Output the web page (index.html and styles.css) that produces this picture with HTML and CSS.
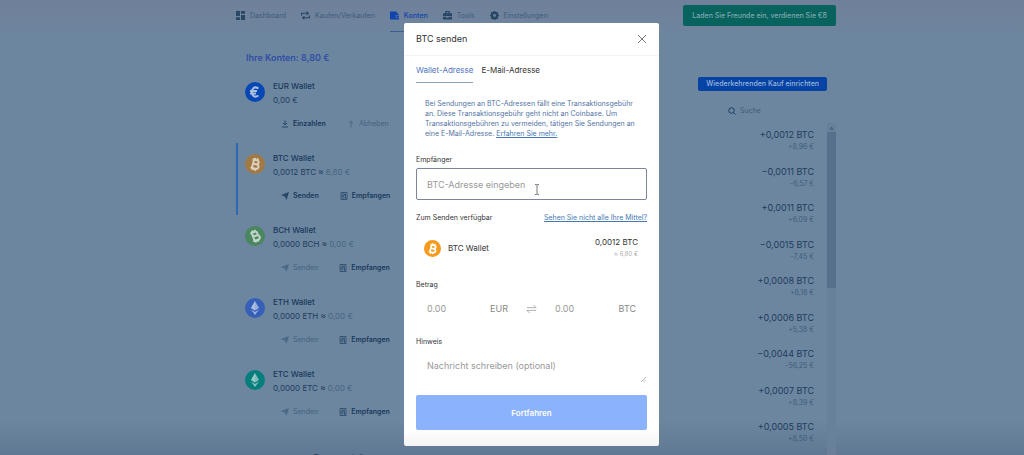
FILE: index.html
```
<!DOCTYPE html>
<html lang="de">
<head>
    <meta charset="UTF-8">
    <meta name="viewport" content="width=device-width, initial-scale=1.0">
    <title>BTC senden</title>
    <link rel="stylesheet" href="styles.css">
</head>
<body>
    <!-- Shared icons -->
    <svg class="sprite" aria-hidden="true">
        <symbol id="send" viewBox="0 0 16 16"><path d="M0 6 16 0 11 16 7.5 9z" fill="currentColor"/></symbol>
        <symbol id="qr" viewBox="0 0 16 16"><path d="M2 1h12v14H2zM6 1v14M9 4h2v3H9zM9 11h3M11 8v6M2 8h6" fill="none" stroke="currentColor" stroke-width="1.500"/></symbol>
        <symbol id="bitcoin" viewBox="0 0 40 40"><g transform="rotate(14 20 20)" fill="none" stroke="#fff" stroke-width="4"><path d="M13 12h9c6 0 6 8 0 8h-6 7c7 0 7 9 0 9H13M16 12v17M18 8v4M23 8v4M18 29v4M23 29v4"/></g></symbol>
        <symbol id="ether" viewBox="0 0 40 40"><path d="M20 6 28 20 20 25 12 20z" fill="#fff" opacity=".75"/><path d="M20 6v19l-8-5z" fill="#fff" opacity=".6"/><path d="M12 23l8 5 8-5-8 11z" fill="#fff" opacity=".8"/></symbol>
    </svg>

    <div class="page">
        <header class="topbar">
            <nav class="nav">
                <a href="#"><svg viewBox="0 0 16 16"><path d="M0 0h7v9H0zM9 0h7v5H9zM0 11h7v5H0zM9 7h7v9H9z" fill="currentColor"/></svg>Dashboard</a>
                <a href="#"><svg viewBox="0 0 16 16"><path d="M1 8V4h12M10 1l3 3-3 3M15 8v4H3M6 9l-3 3 3 3" fill="none" stroke="currentColor" stroke-width="2"/></svg>Kaufen/Verkaufen</a>
                <a href="#" class="active"><svg viewBox="0 0 16 16"><path d="M0 1h12v3h3v3h-5v5h6v3H0zM11 8h5v3h-5z" fill="currentColor"/></svg>Konten</a>
                <a href="#"><svg viewBox="0 0 16 16"><path d="M4 4V0h8v4h4v5H0V4zM6 2v2h4V2zM0 10h6v2h4v-2h6v5H0z" fill="currentColor" fill-rule="evenodd"/></svg>Tools</a>
                <a href="#"><svg viewBox="0 0 16 16"><circle cx="8" cy="8" r="4.5" fill="none" stroke="currentColor" stroke-width="4"/><path d="M8 0v3M8 13v3M0 8h3M13 8h3M2.3 2.3l2 2M11.7 11.7l2 2M13.7 2.3l-2 2M4.3 11.7l-2 2" stroke="currentColor" stroke-width="3"/></svg>Einstellungen</a>
            </nav>
            <button class="invite">Laden Sie Freunde ein, verdienen Sie €8</button>
        </header>

        <main class="content">
            <section class="accounts">
                <h2>Ihre Konten: 8,80 €</h2>
                <article class="account">
                    <svg class="coin eur" viewBox="0 0 40 40"><path d="M27 13c-8-5-13-1-13 7s5 12 13 7M10 18h14M10 23h12" fill="none" stroke="currentColor" stroke-width="4"/></svg>
                    <div class="account-info">
                        <h3>EUR Wallet</h3>
                        <p>0,00 €</p>
                        <div class="actions">
                            <button><svg viewBox="0 0 16 16"><path d="M8 1v9M4 6l4 4 4-4M2 14h12" fill="none" stroke="currentColor" stroke-width="2"/></svg>Einzahlen</button>
                            <button disabled><svg viewBox="0 0 16 16"><path d="M8 15V2M4 6l4-4 4 4" fill="none" stroke="currentColor" stroke-width="2"/></svg>Abheben</button>
                        </div>
                    </div>
                </article>
                <article class="account selected">
                    <svg class="coin btc"><use href="#bitcoin"/></svg>
                    <div class="account-info">
                        <h3>BTC Wallet</h3>
                        <p>0,0012 BTC ≈ <span>6,80 €</span></p>
                        <div class="actions">
                            <button><svg><use href="#send"/></svg>Senden</button>
                            <button><svg><use href="#qr"/></svg>Empfangen</button>
                        </div>
                    </div>
                </article>
                <article class="account">
                    <svg class="coin bch" viewBox="0 0 40 40"><use href="#bitcoin" transform="rotate(-34 20 20)"/></svg>
                    <div class="account-info">
                        <h3>BCH Wallet</h3>
                        <p>0,0000 BCH ≈ <span>0,00 €</span></p>
                        <div class="actions">
                            <button disabled><svg><use href="#send"/></svg>Senden</button>
                            <button><svg><use href="#qr"/></svg>Empfangen</button>
                        </div>
                    </div>
                </article>
                <article class="account">
                    <svg class="coin eth"><use href="#ether"/></svg>
                    <div class="account-info">
                        <h3>ETH Wallet</h3>
                        <p>0,0000 ETH ≈ <span>0,00 €</span></p>
                        <div class="actions">
                            <button disabled><svg><use href="#send"/></svg>Senden</button>
                            <button><svg><use href="#qr"/></svg>Empfangen</button>
                        </div>
                    </div>
                </article>
                <article class="account">
                    <svg class="coin etc"><use href="#ether"/></svg>
                    <div class="account-info">
                        <h3>ETC Wallet</h3>
                        <p>0,0000 ETC ≈ <span>0,00 €</span></p>
                        <div class="actions">
                            <button disabled><svg><use href="#send"/></svg>Senden</button>
                            <button><svg><use href="#qr"/></svg>Empfangen</button>
                        </div>
                    </div>
                </article>
                <button class="create">+ Tresor erstellen</button>
            </section>

            <section class="history">
                <button class="recurring">Wiederkehrenden Kauf einrichten</button>
                <label class="search">
                    <svg viewBox="0 0 16 16"><circle cx="7" cy="7" r="5.5" fill="none" stroke="currentColor" stroke-width="2"/><path d="M11 11l4 4" stroke="currentColor" stroke-width="2"/></svg>
                    <input type="text" placeholder="Suche" aria-label="Suche">
                </label>
                <div class="list">
                    <ul>
                        <li>+0,0012 BTC<small>+8,96 €</small></li>
                        <li>−0,0011 BTC<small>-6,57 €</small></li>
                        <li>+0,0011 BTC<small>+6,09 €</small></li>
                        <li>−0,0015 BTC<small>-7,45 €</small></li>
                        <li>+0,0008 BTC<small>+8,18 €</small></li>
                        <li>+0,0006 BTC<small>+5,38 €</small></li>
                        <li>−0,0044 BTC<small>-56,25 €</small></li>
                        <li>+0,0007 BTC<small>+8,39 €</small></li>
                        <li>+0,0005 BTC<small>+8,50 €</small></li>
                    </ul>
                    <div class="scrollbar">
                        <svg viewBox="0 0 8 8"><path d="M2 6l2-3 2 3z" fill="currentColor"/></svg>
                        <div class="thumb"></div>
                    </div>
                </div>
            </section>
        </main>
    </div>

    <div class="overlay">
        <form class="modal" role="dialog" aria-labelledby="title">
            <div class="modal-header">
                <h1 id="title">BTC senden</h1>
                <button type="button" class="close" aria-label="Schließen"><svg viewBox="0 0 10 10"><path d="M1 1l8 8M9 1L1 9" stroke="currentColor"/></svg></button>
            </div>
            <div class="modal-body">
                <div class="tabs">
                    <button type="button" class="active">Wallet-Adresse</button>
                    <button type="button">E-Mail-Adresse</button>
                </div>
                <p class="notice">Bei Sendungen an BTC-Adressen fällt eine Transaktionsgebühr<br>an. Diese Transaktionsgebühr geht nicht an Coinbase. Um<br>Transaktionsgebühren zu vermeiden, tätigen Sie Sendungen an<br>eine E-Mail-Adresse. <a href="#">Erfahren Sie mehr.</a></p>

                <label class="label" for="recipient">Empfänger</label>
                <div class="recipient">
                    <input id="recipient" type="text" placeholder="BTC-Adresse eingeben">
                    <svg class="caret" viewBox="0 0 6 11"><path d="M1 .5h1.5l.5.5.5-.5H5M3 1v9M1 10.500h1.500l.5-.5.5.5H5" fill="none" stroke="#777"/></svg>
                </div>

                <div class="available">
                    <span class="label">Zum Senden verfügbar</span>
                    <a href="#">Sehen Sie nicht alle Ihre Mittel?</a>
                </div>
                <div class="source">
                    <svg class="coin"><use href="#bitcoin"/></svg>
                    <span>BTC Wallet</span>
                    <div class="balance">0,0012 BTC<small>≈ 6,80 €</small></div>
                </div>

                <label class="label" for="eur">Betrag</label>
                <div class="amount">
                    <div class="field"><input id="eur" type="text" placeholder="0.00"><span>EUR</span></div>
                    <svg viewBox="0 0 12 10"><path d="M1 3.500h10L8 .5M11 6.500H1l3 3" fill="none" stroke="currentColor"/></svg>
                    <div class="field"><input type="text" placeholder="0.00" aria-label="Betrag in BTC"><span>BTC</span></div>
                </div>

                <label class="label" for="note">Hinweis</label>
                <div class="note">
                    <textarea id="note" placeholder="Nachricht schreiben (optional)"></textarea>
                    <svg class="grip" viewBox="0 0 6 6"><path d="M0 6l6-6M3 6l3-3" stroke="#aaa"/></svg>
                </div>
                <button type="submit" class="submit">Fortfahren</button>
            </div>
        </form>
    </div>
</body>
</html>
```
FILE: styles.css
```
* {
    box-sizing: border-box;
}

body {
    margin: 0;
    font-family: Inter, "Liberation Sans", sans-serif;
    font-size: 8px;
    line-height: 12px;
    color: #1d3c5e;
    background: linear-gradient(#70809a, #6d869f 40px, #6d869f 420px, #607893);
}

h1, h2, h3, p, ul {
    margin: 0;
    padding: 0;
}

button {
    padding: 0;
    border: none;
    background: none;
    font: inherit;
    color: inherit;
    cursor: pointer;
}

input, textarea {
    min-width: 0;
    padding: 0;
    border: none;
    outline: none;
    background: none;
    font: inherit;
    color: inherit;
}

.sprite {
    display: none;
}

.page {
    display: flex;
    flex-direction: column;
    max-width: 648px;
    height: 100vh;
    margin: 0 auto;
    padding-left: 48px;
    overflow: hidden;
}

/* Top bar */
.topbar {
    display: flex;
    justify-content: space-between;
    align-items: flex-start;
    height: 32px;
}

.nav {
    display: flex;
    gap: 15px;
    font-size: 7px;
}

.nav a {
    display: flex;
    align-items: center;
    gap: 5px;
    height: 32px;
    border-bottom: 1px solid transparent;
    color: #415c7b;
    text-decoration: none;
}

.nav svg {
    width: 9px;
    height: 9px;
    color: #294765;
}

.nav .active {
    border-color: #3c5c96;
    color: #1b49a8;
    font-weight: 600;
}

.nav .active svg {
    color: #1045ae;
}

.invite {
    height: 21px;
    margin-top: 5px;
    padding: 0 9px;
    border-radius: 2px;
    background: #08635f;
    color: #7fa7ac;
    font-size: 7px;
    font-weight: 500;
}

.content {
    display: flex;
    flex: 1;
    justify-content: space-between;
    min-height: 0;
}

/* Accounts */
.accounts {
    width: 194px;
}

.accounts h2 {
    padding: 20px 10px 7px;
    font-size: 9px;
    font-weight: 600;
    color: #304fa4;
}

.account {
    display: flex;
    gap: 8px;
    height: 72px;
    padding: 9px 0 0 7px;
    border-left: 2px solid transparent;
}

.account.selected {
    border-color: #2e67b5;
}

.coin {
    flex: none;
    width: 20px;
    height: 20px;
    border-radius: 50%;
}

.account .coin {
    margin-top: 2px;
}

.eur {
    background: #0747b5;
    color: #a9bfdd;
}

.btc {
    background: #a27a45;
}

.bch {
    background: #4b8660;
}

.eth {
    background: #365fb8;
}

.etc {
    background: #067e7b;
}

.account .coin use {
    opacity: 0.65;
}

.account h3 {
    margin-bottom: 2px;
    font-size: 8px;
    font-weight: 500;
    color: #17385b;
}

.account span {
    color: #466481;
}

.actions {
    display: flex;
    gap: 21px;
    margin: 12px 0 0 8px;
    font-size: 7px;
}

.actions button {
    display: flex;
    align-items: center;
    gap: 4px;
    height: 12px;
    font-weight: 600;
    color: #17385b;
}

.actions button:disabled {
    color: #45617e;
    font-weight: 400;
}

.actions svg {
    width: 8px;
    height: 8px;
    opacity: 0.8;
}

.create {
    margin: 20px 0 0 70px;
    font-size: 8px;
}

/* History */
.history {
    display: flex;
    flex-direction: column;
    width: 159px;
    padding-top: 45px;
}

.recurring {
    align-self: flex-end;
    height: 14px;
    margin-right: 9px;
    padding: 0 8px;
    border-radius: 2px;
    background: #0743a4;
    color: #9cb7dc;
    font-size: 7px;
    font-weight: 500;
}

.search {
    display: flex;
    align-items: center;
    gap: 4px;
    margin: 14px 0 6px;
    padding-left: 51px;
    font-size: 7px;
}

.search svg {
    flex: none;
    width: 8px;
    height: 8px;
}

.search input {
    width: 80px;
}

.search input::placeholder {
    color: #3f5c7b;
}

.list {
    display: flex;
    flex: 1;
    gap: 13px;
}

.list ul {
    display: grid;
    flex: 1;
    grid-auto-rows: 1fr;
    padding-bottom: 3px;
    list-style: none;
    text-align: right;
}

.list li {
    padding-top: 6px;
    font-size: 9px;
}

.list small {
    display: block;
    font-size: 7px;
    color: #3f5c7b;
}

.scrollbar {
    width: 9px;
    background: #68809a;
}

.scrollbar svg {
    display: block;
    width: 9px;
    height: 9px;
    color: #486380;
}

.thumb {
    height: 47%;
    background: #566f8b;
}

/* Modal */
.overlay {
    position: fixed;
    inset: 0;
    display: flex;
    justify-content: center;
    align-items: flex-start;
    padding: 23px 0 0 39px;
}

.modal {
    width: 255px;
    border-radius: 2px;
    background: linear-gradient(#fff 96%, #f4f4f4);
    color: #333;
}

.modal-header {
    display: flex;
    justify-content: space-between;
    align-items: center;
    height: 33px;
    padding: 0 12px;
    border-bottom: 1px solid #f3f4f6;
}

.modal-header h1 {
    font-size: 9px;
    font-weight: 400;
}

.close svg {
    display: block;
    width: 10px;
    height: 10px;
    color: #777;
}

.modal-body {
    padding: 8px 12px 16px;
}

.tabs {
    display: flex;
    gap: 8px;
}

.tabs button {
    padding-bottom: 6px;
    border-bottom: 1px solid transparent;
}

.tabs .active {
    border-color: #8fa0be;
    color: #4f74bf;
}

.notice {
    margin: 16px 0;
    padding-left: 9px;
    font-size: 7px;
    line-height: 10px;
    white-space: nowrap;
    color: #5273a5;
}

.modal a {
    color: #4678b0;
}

.label {
    display: block;
    font-size: 7px;
    line-height: 10px;
}

.recipient {
    position: relative;
    margin: 3px 0 13px;
}

.recipient input {
    width: 100%;
    height: 32px;
    padding: 0 10px;
    border: 1px solid #7b8798;
    border-radius: 2px;
    font-size: 9px;
}

.modal ::placeholder {
    color: #999;
}

.caret {
    position: absolute;
    top: 16px;
    left: 118px;
    width: 6px;
    height: 11px;
}

.available {
    display: flex;
    justify-content: space-between;
    font-size: 7px;
    line-height: 10px;
}

.source {
    display: flex;
    align-items: center;
    gap: 7px;
    margin: 13px 0 20px;
    padding: 0 9px 0 8px;
}

.source .coin {
    width: 17px;
    height: 17px;
    background: #f59a1b;
}

.balance {
    margin-left: auto;
    text-align: right;
}

.balance small {
    display: block;
    font-size: 6px;
    color: #aaa;
}

.amount {
    display: flex;
    align-items: center;
    gap: 18px;
    height: 24px;
    margin: 7px 0 16px;
    padding: 0 11px;
    font-size: 9px;
    color: #888;
}

.amount > svg {
    flex: none;
    width: 11px;
    height: 10px;
    color: #aaa;
}

.field {
    display: flex;
    flex: 1;
    min-width: 0;
}

.field input {
    flex: 1;
    width: 0;
}

.note {
    position: relative;
    height: 29px;
    margin: 7px 0 12px;
}

.note textarea {
    display: block;
    width: 100%;
    height: 100%;
    padding: 6px 11px;
    font-size: 9px;
    resize: none;
}

.grip {
    position: absolute;
    right: 1px;
    bottom: 1px;
    width: 5px;
    height: 5px;
}

.submit {
    width: 100%;
    height: 35px;
    border-radius: 2px;
    background: #8bb2fc;
    color: #fff;
    font-weight: 600;
}
```
